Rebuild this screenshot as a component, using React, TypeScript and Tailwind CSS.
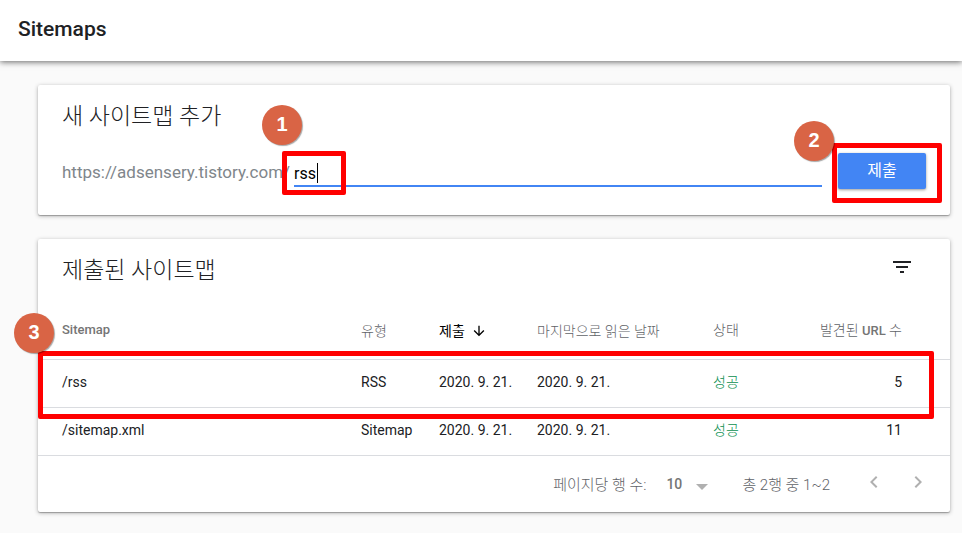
// src/App.tsx
import { useState } from "react";
import clsx from "clsx";

interface Sitemap {
  path: string;
  type: string;
  submitted: string;
  lastRead: string;
  status: string;
  urls: number;
}

const SITEMAPS: Sitemap[] = [
  { path: "/rss", type: "RSS", submitted: "2020. 9. 21.", lastRead: "2020. 9. 21.", status: "성공", urls: 5 },
  { path: "/sitemap.xml", type: "Sitemap", submitted: "2020. 9. 21.", lastRead: "2020. 9. 21.", status: "성공", urls: 11 },
];

const CARD = "rounded-xs bg-white shadow-[0_1px_4px_rgba(0,0,0,0.3),0_1px_1px_rgba(0,0,0,0.25)]";

// Numbered step marker
function Step({ n, className }: { n: number; className: string }) {
  return (
    <span
      className={clsx(
        "pointer-events-none absolute z-10 flex size-10 items-center justify-center rounded-full bg-[#d96445] pb-0.5 font-['Liberation_Sans',sans-serif] text-xl font-bold text-white shadow-[1px_1px_1px_rgba(0,0,0,0.35)]",
        className
      )}
    >
      {n}
    </span>
  );
}

// Red outline around the part a step is about
function Highlight({ className }: { className: string }) {
  return <span className={clsx("pointer-events-none absolute rounded-xs border-5 border-[#ff0000]", className)} />;
}

function Icon({ d, className }: { d: string; className?: string }) {
  return (
    <svg viewBox="0 0 24 24" fill="currentColor" className={clsx("shrink-0", className)} aria-hidden="true">
      <path d={d} />
    </svg>
  );
}

function AddSitemap() {
  const [path, setPath] = useState("rss");

  return (
    <section className={clsx(CARD, "px-6 pt-4 pb-[26px]")}>
      <h2 className="text-[23px] leading-8 font-light">새 사이트맵 추가</h2>
      <form className="mt-5 flex items-center" onSubmit={(e) => e.preventDefault()}>
        <label htmlFor="path" className="pt-0.5 text-[17px] leading-6 text-[#80868b]">
          https://adsensery.tistory.com/
        </label>
        <div className="relative ml-1 flex-1">
          <input
            id="path"
            value={path}
            onChange={(e) => setPath(e.target.value)}
            className="block h-8 w-full border-b-2 border-[#4285f4] pt-1.5 text-base text-black outline-none"
          />
          <span className="absolute top-2 left-[23px] h-5 w-px bg-black" />
          <Highlight className="-top-1 -left-3 h-11 w-16" />
          <Step n={1} className="-top-12.5 -left-8" />
        </div>
        <div className="relative ml-4">
          <button
            type="submit"
            className="block h-9 w-22 rounded-xs bg-[#4285f4] text-base text-white shadow-[0_1px_3px_rgba(0,0,0,0.4)]"
          >
            제출
          </button>
          <Highlight className="-top-2.5 -right-4 -bottom-3.5 -left-1.5" />
          <Step n={2} className="-top-8 -left-11" />
        </div>
      </form>
    </section>
  );
}

function SitemapTable() {
  return (
    <div className="relative">
      <table className="w-full table-fixed text-left text-sm">
        <colgroup>
          <col />
          <col className="w-[78px]" />
          <col className="w-[98px]" />
          <col className="w-[176px]" />
          <col className="w-[237px]" />
        </colgroup>
        <thead>
          <tr className="h-15 border-b border-[#dadce0] text-[#5f6368]">
            <th className="pt-1 pl-6 text-[13px] font-medium text-[#757575]">Sitemap</th>
            <th className="pt-1 font-light">유형</th>
            <th className="pt-1 font-normal text-black">
              <button type="button" className="flex items-center gap-1.5">
                제출
                <Icon
                  className="size-4"
                  d="M20 12l-1.41-1.41L13 16.17V4h-2v12.17l-5.58-5.59L4 12l8 8 8-8z"
                />
              </button>
            </th>
            <th className="pt-1 font-light">마지막으로 읽은 날짜</th>
            <th className="pt-1 font-light">
              <div className="flex justify-between pr-12">
                <span>상태</span>
                <span>
                  발견된 <span className="text-[13px] font-medium text-[#757575]">URL</span> 수
                </span>
              </div>
            </th>
          </tr>
        </thead>
        <tbody>
          {SITEMAPS.map((s) => (
            <tr key={s.path} className="h-12 border-b border-[#dadce0]">
              <td className="pb-0.5 pl-6">{s.path}</td>
              <td className="pb-0.5">{s.type}</td>
              <td className="pb-0.5">{s.submitted}</td>
              <td className="pb-0.5">{s.lastRead}</td>
              <td className="pb-0.5">
                <div className="flex justify-between pr-12">
                  <span className="font-light text-[#0b8f50]">{s.status}</span>
                  <span>{s.urls}</span>
                </div>
              </td>
            </tr>
          ))}
        </tbody>
      </table>
      <Highlight className="top-13 right-4 left-0 h-17" />
      <Step n={3} className="top-3.5 -left-6" />
    </div>
  );
}

function Pagination() {
  return (
    <div className="flex h-14 items-center justify-end pr-5 text-sm text-[#5f6368]">
      <label htmlFor="rows" className="pt-1 text-[15px] font-light">
        페이지당 행 수:
      </label>
      <div className="relative ml-5">
        <select id="rows" defaultValue="10" className="block w-11 appearance-none font-medium text-[#757575] outline-none">
          <option>10</option>
          <option>25</option>
          <option>50</option>
        </select>
        <Icon className="pointer-events-none absolute top-0 -right-1 size-6 text-[#b0b0b0]" d="M6 10l6 6 6-6z" />
      </div>
      <span className="ml-8 pt-1 text-[15px] font-light">총 2행 중 1~2</span>
      <button type="button" aria-label="이전" className="ml-8 pb-1 text-[#b0b0b0]">
        <Icon className="size-6" d="M15.41 7.41L14 6l-6 6 6 6 1.41-1.41L10.83 12z" />
      </button>
      <button type="button" aria-label="다음" className="ml-5 pb-1 text-[#b0b0b0]">
        <Icon className="size-6" d="M10 6L8.59 7.41 13.17 12l-4.58 4.59L10 18l6-6z" />
      </button>
    </div>
  );
}

export default function App() {
  return (
    <div className="min-h-screen bg-[#fafafa] font-[Roboto,'Noto_Sans_CJK_KR',sans-serif] text-[#202124]">
      <header className="flex h-[61px] items-center bg-white px-[18px] pb-1 shadow-[0_1px_6px_rgba(0,0,0,0.6)]">
        <h1 className="text-[21px] leading-7 font-medium">Sitemaps</h1>
      </header>

      <main className="space-y-6 pt-6 pr-3 pb-5 pl-[38px]">
        <AddSitemap />

        <section className={CARD}>
          <div className="flex items-start justify-between pt-4 pr-9 pb-3 pl-6">
            <h2 className="text-[23px] leading-8 font-light">제출된 사이트맵</h2>
            <button type="button" aria-label="필터">
              <Icon className="size-6" d="M10 18h4v-2h-4v2zM3 6v2h18V6H3zm3 7h12v-2H6v2z" />
            </button>
          </div>
          <SitemapTable />
          <Pagination />
        </section>
      </main>
    </div>
  );
}
